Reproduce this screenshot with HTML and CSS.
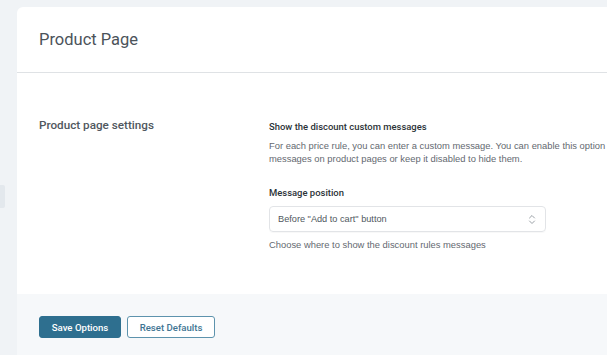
FILE: index.html
```html
<!DOCTYPE html>
<html>
<head>
<meta charset="utf-8">
<link rel="stylesheet" href="styles.css">
</head>
<body>
<div class="page">
  <div class="sidebar"><div class="tab"></div></div>
  <div class="card">
    <div class="header"><h1 class="title">Product Page</h1></div>
    <div class="section">
      <div class="section-title">Product page settings</div>
      <div class="fields">
        <div class="field">
          <div class="label">Show the discount custom messages</div>
          <p class="desc">For each price rule, you can enter a custom message. You can enable this option to show<br>messages on product pages or keep it disabled to hide them.</p>
        </div>
        <div class="field field-position">
          <div class="label">Message position</div>
          <div class="select">
            <span>Before "Add to cart" button</span>
            <svg class="chev" width="8" height="11" viewBox="0 0 8 11"><path d="M1.5 4 L4 1.5 L6.5 4 M1.5 7 L4 9.5 L6.5 7" fill="none" stroke="#9aa0a6" stroke-width="1" stroke-linecap="round" stroke-linejoin="round"/></svg>
          </div>
          <div class="help">Choose where to show the discount rules messages</div>
        </div>
      </div>
    </div>
    <div class="footer">
      <button class="btn btn-primary">Save Options</button>
      <button class="btn btn-secondary">Reset Defaults</button>
    </div>
  </div>
</div>
</body>
</html>
```
FILE: styles.css
```css
html, body {
  margin: 0;
  padding: 0;
  height: 100%;
  overflow: hidden;
  background: #f0f3f6;
  font-family: "Liberation Sans", Arial, sans-serif;
}
.page {
  display: flex;
  height: 100%;
  padding-top: 7px;
  box-sizing: border-box;
}
.sidebar {
  width: 17px;
  flex: none;
  padding-top: 178px;
}
.tab {
  width: 5px;
  height: 23px;
  background: #e3e8ed;
  border-radius: 0 2px 2px 0;
}
.card {
  flex: 1;
  background: #fff;
  border-radius: 6px 0 0 0;
  display: flex;
  flex-direction: column;
  min-width: 0;
  overflow: hidden;
}
.header {
  height: 66px;
  box-sizing: border-box;
  border-bottom: 1px solid #dfe2e5;
  display: flex;
  align-items: center;
  padding-left: 22px;
}
.title {
  margin: 0;
  font-family: Roboto, "Liberation Sans", sans-serif;
  font-size: 16.5px;
  font-weight: 400;
  color: #4b535a;
}
.section {
  height: 221px;
  box-sizing: border-box;
  padding: 44px 0 0 22px;
  display: grid;
  grid-template-columns: 230px 1fr;
}
.section-title {
  font-family: Roboto, "Liberation Sans", sans-serif;
  font-size: 11.7px;
  font-weight: 500;
  color: #50575e;
  padding-top: 1px;
}
.fields {
  padding-top: 3px;
  min-width: 0;
}
.label {
  font-family: Roboto, "Liberation Sans", sans-serif;
  font-size: 9.45px;
  font-weight: 500;
  color: #2c3338;
  line-height: 14px;
}
.desc {
  margin: 6px 0 0;
  font-size: 9.4px;
  line-height: 12.5px;
  color: #646970;
  white-space: nowrap;
}
.field-position {
  margin-top: 21px;
}
.select {
  margin-top: 6px;
  width: 277px;
  height: 26px;
  box-sizing: border-box;
  border: 1px solid #e2e4e7;
  border-radius: 4px;
  box-shadow: 0 1px 1px rgba(0,0,0,0.03);
  display: flex;
  align-items: center;
  justify-content: space-between;
  padding: 0 9px 0 8px;
  font-size: 9.2px;
  color: #50575e;
}
.chev {
  display: block;
}
.help {
  margin-top: 7px;
  font-size: 9.4px;
  color: #646970;
}
.footer {
  flex: 1;
  background: #f6f8fa;
  padding: 22px 0 0 22px;
  display: flex;
  align-items: flex-start;
  gap: 6px;
}
.btn {
  height: 22px;
  box-sizing: border-box;
  border-radius: 3px;
  font-family: Roboto, "Liberation Sans", sans-serif;
  font-size: 9.6px;
  font-weight: 500;
  padding: 0;
  white-space: nowrap;
  cursor: pointer;
}
.btn-primary {
  background: #2e6f8f;
  border: 1px solid #2e6f8f;
  color: #fff;
  width: 82px;
}
.btn-secondary {
  background: #fff;
  border: 1px solid #5d93ad;
  color: #3f7593;
  width: 88px;
}
```
